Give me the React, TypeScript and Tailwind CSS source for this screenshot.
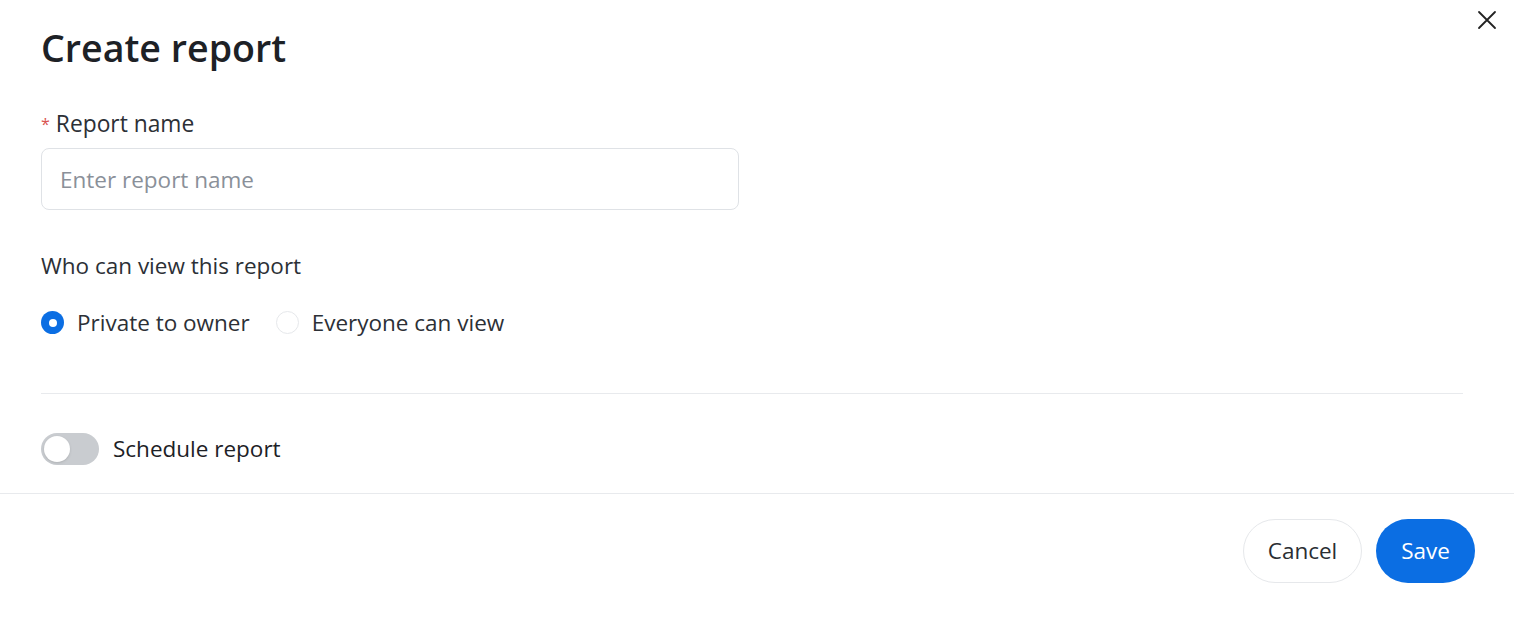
import { useState } from "react";

const CloseIcon = () => (
    <svg width="20" height="20" viewBox="0 0 20 20" fill="none" stroke="#222" strokeWidth="1.8" strokeLinecap="round">
        <path d="M2 2 L18 18 M18 2 L2 18" />
    </svg>
);

const Radio = ({ checked, label, onClick }: { checked: boolean; label: string; onClick: () => void }) => (
    <button type="button" onClick={onClick} className="flex items-center gap-[13px]">
        {checked ? (
            <span className="w-[23px] h-[23px] rounded-full bg-[#0b6ee3] flex items-center justify-center">
                <span className="w-[8px] h-[8px] rounded-full bg-white" />
            </span>
        ) : (
            <span className="w-[23px] h-[23px] rounded-full border border-[#e6e8eb] bg-white" />
        )}
        <span className="text-[22.5px] text-[#2c3036]">{label}</span>
    </button>
);

export default function App() {
    const [visibility, setVisibility] = useState<"private" | "everyone">("private");
    const [scheduled, setScheduled] = useState(false);

    return (
        <div className="w-[1514px] h-[620px] bg-white relative font-['Open_Sans',sans-serif] text-[#2a2e33]">
            <button type="button" className="absolute top-[10px] right-[17px] p-0">
                <CloseIcon />
            </button>

            <div className="px-[41px] pt-[24px]">
                <h1 className="text-[37.6px] font-semibold text-[#1d2126] leading-[48px]">Create report</h1>

                <label className="block mt-[37px] text-[22.8px] leading-[30px] text-[#2c3036]">
                    <span className="text-[#d9534f] text-[16px] align-top mr-[6px]">*</span>
                    Report name
                </label>
                <input
                    placeholder="Enter report name"
                    className="mt-[9px] w-[698px] h-[62px] rounded-[8px] border border-[#dfe2e6] px-[18px] text-[22.5px] placeholder:text-[#8a9099] outline-none"
                />

                <p className="mt-[41px] text-[22.5px] leading-[30px] text-[#2c3036]">Who can view this report</p>
                <div className="mt-[25px] flex items-center gap-[26px]">
                    <Radio checked={visibility === "private"} label="Private to owner" onClick={() => setVisibility("private")} />
                    <Radio checked={visibility === "everyone"} label="Everyone can view" onClick={() => setVisibility("everyone")} />
                </div>

                <div className="mt-[53px] w-[1422px] border-t border-[#e8eaed]" />

                <div className="mt-[38px] flex items-center gap-[14px]">
                    <button
                        type="button"
                        onClick={() => setScheduled((s) => !s)}
                        className={`w-[58px] h-[32px] rounded-full p-[3px] flex ${scheduled ? "bg-[#0b6ee3] justify-end" : "bg-[#c9ccd0] justify-start"}`}
                    >
                        <span className="w-[26px] h-[26px] rounded-full bg-white shadow-sm" />
                    </button>
                    <span className="text-[22.5px] text-[#1d2126]">Schedule report</span>
                </div>
            </div>

            <div className="mt-[27px] border-t border-[#e8eaed] flex justify-end gap-[14px] pt-[25px] pr-[39px]">
                <button type="button" className="h-[64px] px-[24px] rounded-full border border-[#e6e8eb] text-[22.5px] text-[#2a2e33] bg-white">
                    Cancel
                </button>
                <button type="button" className="h-[64px] px-[25px] rounded-full bg-[#0b6ee3] text-[22.5px] text-white">
                    Save
                </button>
            </div>
        </div>
    );
}
